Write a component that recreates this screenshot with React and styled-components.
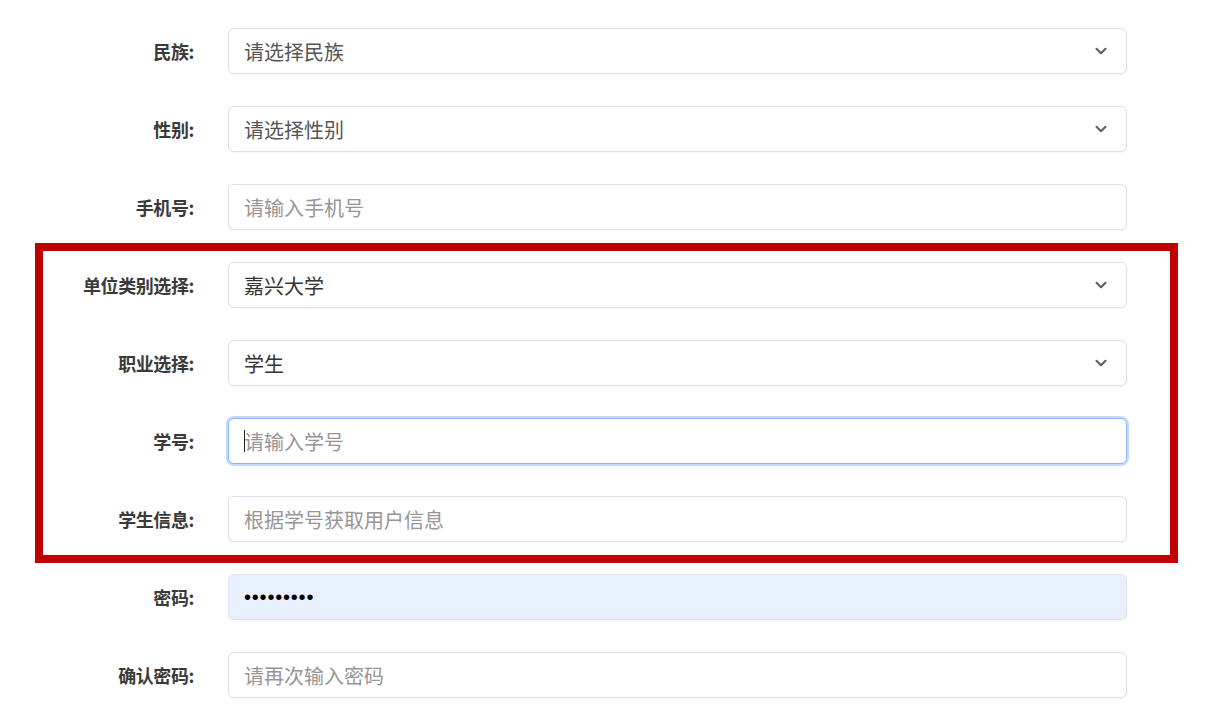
import React from 'react';
import styled, { createGlobalStyle, css, } from 'styled-components';
import { ChevronDown, } from 'lucide-react';

const GlobalStyle = createGlobalStyle`
  html, body {
    margin: 0;
    padding: 0;
    background: #fff;
  }
  body {
    font-family: "Noto Sans CJK SC", "Noto Sans", sans-serif;
  }
`;

const Page = styled.div`
  width: 1205px;
  height: 711px;
  overflow: hidden;
  background: #fff;
`;

const Form = styled.form`
  display: flex;
  flex-direction: column;
  align-items: flex-start;
  gap: 32px;
  padding-top: 28px;
`;

const Highlight = styled.div`
  display: flex;
  flex-direction: column;
  gap: 32px;
  margin: -19px 0 -21px 35px;
  padding: 11px 43px 13px 0;
  border: 8px solid #c00000;
`;

const Row = styled.div`
  display: grid;
  grid-template-columns: ${( { labelWidth, } ) => labelWidth}px 899px;
  column-gap: 34px;
  align-items: center;
  height: 46px;
`;

const Label = styled.label`
  justify-self: end;
  font-size: 18px;
  font-weight: 700;
  color: #3a3a3a;
  letter-spacing: -0.4px;
  white-space: nowrap;
`;

const fieldBox = css`
  box-sizing: border-box;
  width: 899px;
  height: 46px;
  border: 1px solid #dcdfe5;
  border-radius: 6px;
  background: #fff;
  box-shadow: 0 1px 2px rgba(0, 0, 0, 0.04);
  font-family: "Noto Sans CJK SC", "Noto Sans", sans-serif;
  font-size: 20px;
`;

const SelectBox = styled.div`
  ${fieldBox};
  display: flex;
  align-items: center;
  justify-content: space-between;
  padding: 0 16px 0 15px;
  color: ${( { filled, } ) => filled ? '#333' : '#555'};
  & svg {
    color: #606060;
  }
`;

const TextInput = styled.input`
  ${fieldBox};
  display: block;
  padding: 0 15px;
  color: #333;
  outline: none;
  &::placeholder {
    color: #969696;
  }
  ${( { focused, } ) => focused && css`
    border-color: #8db4f4;
    box-shadow: 0 0 0 2px #c5dbfc;
  `}
`;

const PasswordInput = styled(TextInput)`
  background: #e8f0fe;
  border-color: #dde4ef;
  font-family: "Liberation Sans", Arial, sans-serif;
  color: #000;
  letter-spacing: 0.8px;
`;

const FocusWrap = styled.div`
  position: relative;
  &::before {
    content: '';
    position: absolute;
    left: 16px;
    top: 12px;
    width: 1px;
    height: 22px;
    background: #222;
  }
`;

const Select = ( { value, filled, } ) => (
  <SelectBox filled={ filled }>
    <span>{value}</span>
    <ChevronDown size={ 18 } strokeWidth={ 2.8 } />
  </SelectBox>
);

const Field = ( { label, labelWidth = 194, children, } ) => (
  <Row labelWidth={ labelWidth }>
    <Label>{label}</Label>
    {children}
  </Row>
);

export default function App () {
  return (
    <Page>
      <GlobalStyle />
      <Form onSubmit={ e => e.preventDefault() }>
        <Field label="民族:">
          <Select value="请选择民族" />
        </Field>
        <Field label="性别:">
          <Select value="请选择性别" />
        </Field>
        <Field label="手机号:">
          <TextInput placeholder="请输入手机号" readOnly />
        </Field>
        <Highlight>
          <Field label="单位类别选择:" labelWidth={ 151 }>
            <Select value="嘉兴大学" filled />
          </Field>
          <Field label="职业选择:" labelWidth={ 151 }>
            <Select value="学生" filled />
          </Field>
          <Field label="学号:" labelWidth={ 151 }>
            <FocusWrap>
              <TextInput placeholder="请输入学号" focused readOnly />
            </FocusWrap>
          </Field>
          <Field label="学生信息:" labelWidth={ 151 }>
            <TextInput placeholder="根据学号获取用户信息" readOnly />
          </Field>
        </Highlight>
        <Field label="密码:">
          <PasswordInput type="password" value="123456789" readOnly />
        </Field>
        <Field label="确认密码:">
          <TextInput type="password" placeholder="请再次输入密码" readOnly />
        </Field>
      </Form>
    </Page>
  );
}
